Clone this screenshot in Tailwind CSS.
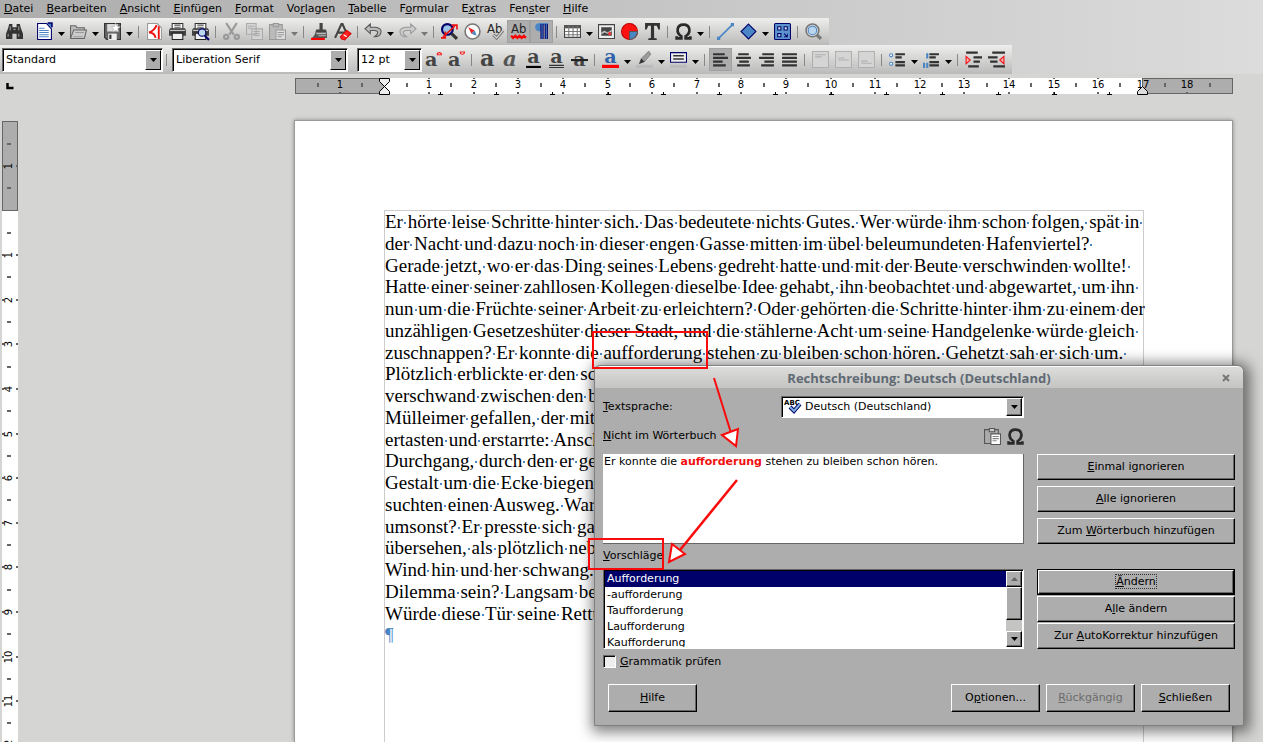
<!DOCTYPE html>
<html lang="de">
<head>
    <meta charset="UTF-8">
    <meta name="viewport" content="width=device-width, initial-scale=1.0">
    <title>Rechtschreibung</title>
    <script src="https://cdn.jsdelivr.net/npm/@tailwindcss/browser@4"></script>
</head>
<body class="relative h-screen overflow-hidden flex flex-col bg-[#d5d5d3] text-black text-[11px] leading-4 font-['DejaVu_Sans',sans-serif]">
    <svg class="hidden">
        <symbol id="drop" viewBox="0 0 7 4"><path d="M0 0h7L3.5 4z" fill="currentColor"/></symbol>
    </svg>

    <header class="bg-linear-to-r from-[#adadad] to-[#dcdcdc]">
        <nav class="flex gap-[13px] h-[18px] pl-1 pt-px">
            <a href="#"><u>D</u>atei</a>
            <a href="#"><u>B</u>earbeiten</a>
            <a href="#"><u>A</u>nsicht</a>
            <a href="#"><u>E</u>infügen</a>
            <a href="#"><u>F</u>ormat</a>
            <a href="#">Vo<u>r</u>lagen</a>
            <a href="#"><u>T</u>abelle</a>
            <a href="#">F<u>o</u>rmular</a>
            <a href="#">E<u>x</u>tras</a>
            <a href="#">Fen<u>s</u>ter</a>
            <a href="#"><u>H</u>ilfe</a>
        </nav>

        <!-- Standard toolbar -->
        <div class="flex items-center w-fit h-[27px] pl-[3px] pr-1 bg-linear-to-b from-[#eeeeec] to-[#bababa] [&>button]:w-[23px] [&>button]:h-[23px] [&>button]:grid [&>button]:place-items-center [&>button>svg]:w-[17px] [&>button>svg]:h-[17px] [&>button>svg]:overflow-visible [&>i]:w-2 [&>i]:h-3 [&>i]:border-r [&>i]:border-[#888] [&>i]:-translate-x-1 [&>svg]:w-[7px] [&>svg]:h-1 [&>svg]:mx-0.5 [&>svg]:mt-1">
            <button aria-label="Suchen" class="mr-[7px]"><svg viewBox="0 0 16 16"><path d="M3 1h3v3h4V1h3l1 4 2 5v5h-6v-5H6v5H0v-5l2-5z" fill="#333"/><path d="M4 3v4M12 3v4M2 10v3M12 10v3M7 6h2" stroke="#999"/></svg></button>
            <button aria-label="Neu"><svg viewBox="0 0 16 16"><path d="M1.5.5H10l4.500 5v10h-13z" fill="#fff" stroke="#00006b"/><path d="M10 0l5 5V0z" fill="#4a86c5"/><path d="M11 0h4v4" fill="none" stroke="#00006b" stroke-width="1.500"/><path d="M3 5h5M3 7h9M3 9h9M3 11h9M3 13h9" stroke="#4a86c5"/></svg></button>
            <svg><use href="#drop"/></svg>
            <button aria-label="Öffnen"><svg viewBox="0 0 16 16"><path d="M.5 14.500v-12h5l1 2h7v3" fill="#bbb" stroke="#666"/><path d="M.5 14.500l3-8h12l-2 8z" fill="#ccc" stroke="#666"/><path d="M5 9h8M3 13h9" stroke="#999"/></svg></button>
            <svg><use href="#drop"/></svg>
            <button aria-label="Speichern"><svg viewBox="0 0 16 16"><path d="M.5.500h15v15h-13l-2-2z" fill="#666" stroke="#333"/><path d="M3 1h10v7H3z" fill="#ddd"/><path d="M4 10h8v6H4z" fill="#eee"/><path d="M5 11h2v4H5z" fill="#333"/><path d="M11 0l1.500 3 3 .5-2.500 2 .8 3L11 7 8 8.500 9 5.500 7 3.500l3-.5z" fill="#fff" stroke="#999" stroke-width=".5"/></svg></button>
            <svg><use href="#drop"/></svg><i></i>
            <button aria-label="Als PDF exportieren"><svg viewBox="0 0 16 16"><path d="M1.500.500h9l4 4v11h-13z" fill="#fff" stroke="#999"/><path d="M12 3v12M10 2Q8 7 3 9q5 0 6 5" fill="none" stroke="#f01010" stroke-width="1.800"/></svg></button>
            <button aria-label="Drucken"><svg viewBox="0 0 16 16"><path d="M3 .5h10V6H3z" fill="#fff" stroke="#333"/><path d="M5 2h6M5 4h6" stroke="#555"/><path d="M1 5h14l1 2v5H0V7z" fill="#444"/><path d="M1 7h14" stroke="#ccc"/><path d="M3 9.500h10v6H3z" fill="#eee" stroke="#222"/></svg></button>
            <button aria-label="Druckvorschau"><svg viewBox="0 0 16 16"><path d="M3 .5h10V6H3z" fill="#fff" stroke="#333"/><path d="M5 2h6M5 4h6" stroke="#555"/><path d="M1 5h14l1 2v5H0V7z" fill="#444"/><path d="M1 7h14" stroke="#ccc"/><path d="M3 9.500h10v6H3z" fill="#eee" stroke="#222"/><circle cx="9.500" cy="9" r="3.500" fill="#bcd8ee" stroke="#00006b"/><path d="M12 12l4 4" stroke="#00006b" stroke-width="2"/></svg></button>
            <i></i>
            <button aria-label="Ausschneiden"><svg viewBox="0 0 16 16" fill="none" stroke="#999" stroke-width="2"><path d="M3 0l7 11M13 0L6 11"/><circle cx="3" cy="13" r="2"/><circle cx="13" cy="13" r="2"/></svg></button>
            <button aria-label="Kopieren"><svg viewBox="0 0 16 16" fill="#d5d5d5" stroke="#aaa"><path d="M.5.5h9v10h-9zM5.500 5.500h10v10h-10z"/><path d="M2 3h6M2 5h3M7 8h6M7 10h6M7 12h6"/></svg></button>
            <button aria-label="Einfügen"><svg viewBox="0 0 16 16" fill="#bbb" stroke="#999"><path d="M.5 1.500h12v14H.500z"/><path d="M4 .5h5v3H4z"/><path d="M6.500 6.500h9v9h-9z" fill="#ddd"/><path d="M8 9h6M8 11h6M8 13h4"/></svg></button>
            <svg class="text-[#777]"><use href="#drop"/></svg><i></i>
            <button aria-label="Format übertragen"><svg viewBox="0 0 16 16"><path d="M8 0h3v6h3l1 3H4l1-3h3z" fill="#444"/><path d="M4 9h11v5H1q3-2 3-5z" fill="#555"/><path d="M5 10h9M7 12h7" stroke="#bbb"/><path d="M0 15h13" stroke="#f00" stroke-width="2"/></svg></button>
            <button aria-label="Direkte Formatierung löschen"><svg viewBox="0 0 16 16"><path d="M1 14L7 1h1l4 9M4 9h6" fill="none" stroke="#444" stroke-width="2"/><path d="M6 13l6-6 4 3-6 6-3-1z" fill="#f22" stroke="#d00"/><path d="M9 11l3 2" stroke="#fff"/></svg></button>
            <i></i>
            <button aria-label="Rückgängig"><svg viewBox="0 0 16 16"><path d="M5 1v3h5q6 1 5 5-1 4-6 4 3-2 3-4 0-2-3-2H5v3L0 5.500z" fill="#bbb" stroke="#555"/></svg></button>
            <svg><use href="#drop"/></svg>
            <button aria-label="Wiederherstellen"><svg viewBox="0 0 16 16"><path d="M11 1v3H6Q0 5 1 9q1 4 6 4-3-2-3-4 0-2 3-2h4v3l5-4.500z" fill="#ccc" stroke="#999"/></svg></button>
            <svg class="text-[#777]"><use href="#drop"/></svg><i></i>
            <button aria-label="Suchen und Ersetzen"><svg viewBox="0 0 16 16"><circle cx="6" cy="6" r="5" fill="#9cc4e6" stroke="#00006b" stroke-width="2"/><path d="M10 10l5 5" stroke="#333" stroke-width="3"/><path d="M2 13L13 3M10 2h5v4M4 8v6H0" fill="none" stroke="#e11" stroke-width="1.500"/></svg></button>
            <button aria-label="Navigator"><svg viewBox="0 0 16 16"><circle cx="8" cy="8" r="7" fill="#fff" stroke="#777" stroke-width="1.500"/><path d="M4 4l6 3-3 3z" fill="#e22"/><path d="M12 12L7 10l3-3z" fill="#4a86c5"/></svg></button>
            <button aria-label="Rechtschreibung"><svg viewBox="0 0 16 16"><text x="0" y="9" font-size="11" fill="#222">Ab</text><path d="M6 11l3 3 6-7" fill="none" stroke="#777" stroke-width="3"/><path d="M6 11l3 3 6-7" fill="none" stroke="#ddd"/></svg></button>
            <button aria-label="Automatische Rechtschreibprüfung" aria-pressed="true" class="bg-[#adadad] border border-[#a0a0a0]"><svg viewBox="0 0 16 16"><text x="1" y="9" font-size="11" fill="#222">Ab</text><path d="M1 12l2 2 2-2 2 2 2-2 2 2 2-2 2 2" fill="none" stroke="#f00" stroke-width="2"/></svg></button>
            <button aria-label="Formatierungszeichen" aria-pressed="true" class="bg-[#adadad] border border-[#a0a0a0]"><svg viewBox="0 0 16 16"><path d="M8 8Q2 8 2 4t5-4h7v2H8z" fill="#4a86c5"/><path d="M8.500 1v14M12.500 1v14" stroke="#00006b" stroke-width="3"/><path d="M8.500 1v14M12.500 1v14" stroke="#4a86c5"/></svg></button>
            <i></i>
            <button aria-label="Tabelle"><svg viewBox="0 0 16 16"><path d="M.500 2.500h15v11H.500z" fill="#fff" stroke="#444"/><path d="M0 2h16v3H0z" fill="#555"/><path d="M4.500 3v10M8.500 3v10M12.500 3v10M1 8h14M1 11h14" stroke="#777"/></svg></button>
            <svg><use href="#drop"/></svg>
            <button aria-label="Bild"><svg viewBox="0 0 16 16"><path d="M.500 1.500h15v13H.500z" fill="#eee" stroke="#444"/><path d="M3 4h10v8H3z" fill="#444"/><path d="M3 9l3-2 3 2 4-3v2l-4 2-3-1-3 2z" fill="#bbb"/><circle cx="11" cy="10" r="1.500" fill="#f33"/></svg></button>
            <button aria-label="Diagramm"><svg viewBox="0 0 16 16"><circle cx="8" cy="8" r="7.500" fill="#f11" stroke="#b00"/><path d="M8 8h7.500A7.500 7.500 0 0 1 8 15.500z" fill="#4a86c5" stroke="#555"/></svg></button>
            <button aria-label="Textfeld"><svg viewBox="0 0 16 16"><path d="M1 0h14v6h-1.500L12 2.500H9.500V14l2.500.500V16H4v-1.500L6.500 14V2.500H4L2.500 6H1z" fill="#333"/></svg></button>
            <i></i>
            <button aria-label="Sonderzeichen"><svg viewBox="0 0 16 16"><path d="M1.500 12.500v2H6v-2Q2 10 2.500 6 3 1.500 8 1.500T13.500 6q.5 4-3.500 6.500v2h4.500v-2" fill="none" stroke="#2a2a2a" stroke-width="2.500"/></svg></button>
            <svg><use href="#drop"/></svg><i></i>
            <button aria-label="Linie"><svg viewBox="0 0 16 16"><path d="M1 15L15 1" stroke="#4a86c5" stroke-width="1.500"/><path d="M0 13h3v3H0zM13 0h3v3h-3z" fill="#4a86c5"/></svg></button>
            <button aria-label="Form"><svg viewBox="0 0 16 16"><path d="M8 1l7 7-7 7-7-7z" fill="#4a86c5" stroke="#00006b"/></svg></button>
            <svg><use href="#drop"/></svg>
            <button aria-label="Zeichenfunktionen"><svg viewBox="0 0 16 16"><rect x=".5" y=".5" width="15" height="15" rx="1" fill="#5b93cc" stroke="#00006b"/><path d="M3.500 3.500h3v3h-3zM9.500 3.500h3v3h-3zM3.500 10h3v3h-3zM9.500 10l3 3M12.500 10v3h-3" fill="#cfe1f3" stroke="#00006b"/></svg></button>
            <i></i>
            <button aria-label="Zoom"><svg viewBox="0 0 16 16"><path d="M10 10l5 5" stroke="#777" stroke-width="3"/><circle cx="7" cy="7" r="6" fill="#ddd" stroke="#777" stroke-width="1.500"/><circle cx="7" cy="7" r="4" fill="#b9d6ee" stroke="#4a86c5"/></svg></button>
        </div>

        <!-- Formatting toolbar -->
        <div class="flex items-center w-fit h-[29px] pl-0.5 pr-1 bg-linear-to-b from-[#eeeeec] to-[#bababa] [&>button]:w-[23px] [&>button]:h-[23px] [&>button]:grid [&>button]:place-items-center [&>button>svg]:w-[17px] [&>button>svg]:h-[17px] [&>button>svg]:overflow-visible [&>i]:w-2 [&>i]:h-3 [&>i]:border-r [&>i]:border-[#888] [&>i]:-translate-x-1 [&>svg]:w-[7px] [&>svg]:h-1 [&>svg]:mx-0.5 [&>svg]:mt-1">
            <div class="flex w-[161px] h-6 border border-t-[#666] border-l-[#666] border-white bg-white shadow-[inset_1px_1px_0_#000]">
                <select aria-label="Absatzvorlage" class="appearance-none flex-1 min-w-0 pl-[3px] outline-none"><option>Standard</option></select>
                <span class="w-4 m-px ml-0 grid place-items-center bg-[#adadad] border border-white border-r-black border-b-black"><svg class="w-[7px] h-1"><use href="#drop"/></svg></span>
            </div>
            <i class="mr-px"></i>
            <div class="flex w-[176px] h-6 border border-t-[#666] border-l-[#666] border-white bg-white shadow-[inset_1px_1px_0_#000]">
                <select aria-label="Schriftart" class="appearance-none flex-1 min-w-0 pl-[3px] outline-none"><option>Liberation Serif</option></select>
                <span class="w-4 m-px ml-0 grid place-items-center bg-[#adadad] border border-white border-r-black border-b-black"><svg class="w-[7px] h-1"><use href="#drop"/></svg></span>
            </div>
            <div class="ml-[9px] flex w-[65px] h-6 border border-t-[#666] border-l-[#666] border-white bg-white shadow-[inset_1px_1px_0_#000]">
                <select aria-label="Schriftgröße" class="appearance-none flex-1 min-w-0 pl-[3px] outline-none"><option>12 pt</option></select>
                <span class="w-4 m-px ml-0 grid place-items-center bg-[#adadad] border border-white border-r-black border-b-black"><svg class="w-[7px] h-1"><use href="#drop"/></svg></span>
            </div>
            <button aria-label="Schrift vergrößern"><svg viewBox="0 0 16 16" font-family="DejaVu Serif" font-weight="bold"><text x="0" y="14" font-size="18" fill="#444">a</text><path d="M11.500 3.500a2 2 0 0 1 4 0z" fill="#fff" stroke="#e22"/></svg></button>
            <button aria-label="Schrift verkleinern"><svg viewBox="0 0 16 16" font-family="DejaVu Serif" font-weight="bold"><text x="0" y="14" font-size="18" fill="#444">a</text><path d="M11.500 1a2 2 0 0 0 4 0z" fill="#fff" stroke="#e22"/></svg></button>
            <i></i>
            <button aria-label="Fett"><svg viewBox="0 0 16 16" font-family="DejaVu Serif" font-weight="bold"><text x="1" y="14" font-size="21" fill="#444">a</text></svg></button>
            <button aria-label="Kursiv"><svg viewBox="0 0 16 16" font-family="DejaVu Serif" font-style="italic" font-weight="bold"><text x="1" y="14" font-size="20" fill="#555">a</text></svg></button>
            <button aria-label="Unterstrichen"><svg viewBox="0 0 16 16" font-family="DejaVu Serif" font-weight="bold"><text x="2" y="11" font-size="18" fill="#444">a</text><path d="M1 15h14" stroke="#000" stroke-width="2"/></svg></button>
            <button aria-label="Doppelt unterstrichen"><svg viewBox="0 0 16 16" font-family="DejaVu Serif" font-weight="bold"><text x="2" y="11" font-size="18" fill="#444">a</text><path d="M1 13.500h14M1 15.500h14" stroke="#333"/></svg></button>
            <button aria-label="Durchgestrichen"><svg viewBox="0 0 16 16" font-family="DejaVu Serif" font-weight="bold"><text x="2" y="14" font-size="18" fill="#444">a</text><path d="M0 8.500h16" stroke="#222" stroke-width="2"/></svg></button>
            <i></i>
            <button aria-label="Schriftfarbe"><svg viewBox="0 0 16 16" font-family="DejaVu Serif" font-weight="bold"><text x="2" y="11" font-size="18" fill="#2f62a8">a</text><path d="M0 14.500h16" stroke="#f00" stroke-width="3"/></svg></button>
            <svg><use href="#drop"/></svg>
            <button aria-label="Zeichenhintergrund"><svg viewBox="0 0 16 16"><path d="M3 12l2-5 7-7 2 3-6 7z" fill="#999" stroke="#666" stroke-width=".5"/><path d="M3 12l2-5 3 3z" fill="#333"/><path d="M0 14.500h16" stroke="#bbb" stroke-width="3"/></svg></button>
            <svg><use href="#drop"/></svg>
            <button aria-label="Absatzhintergrund"><svg viewBox="0 0 16 16"><path d="M.500 1.500h15v9H.500z" fill="#eee" stroke="#00006b"/><path d="M3 4.500h10M3 7.500h10" stroke="#333" stroke-width="1.500"/><path d="M0 14.500h16" stroke="#bbb" stroke-width="3"/></svg></button>
            <svg><use href="#drop"/></svg><i></i>
            <button aria-label="Linksbündig" aria-pressed="true" class="bg-[#adadad] border border-[#a0a0a0]"><svg viewBox="0 0 16 16" stroke="#333" stroke-width="2"><path d="M1 3h11M1 6.500h14M1 10h9M1 13.500h12"/></svg></button>
            <button aria-label="Zentriert"><svg viewBox="0 0 16 16" stroke="#333" stroke-width="2"><path d="M3 3h10M1 6.500h14M4 10h9M2 13.500h12"/></svg></button>
            <button aria-label="Rechtsbündig"><svg viewBox="0 0 16 16" stroke="#333" stroke-width="2"><path d="M4 3h11M1 6.500h14M6 10h9M3 13.500h12"/></svg></button>
            <button aria-label="Blocksatz"><svg viewBox="0 0 16 16" stroke="#333" stroke-width="2"><path d="M1 3h14M1 6.500h14M1 10h14M1 13.500h14"/></svg></button>
            <i></i>
            <button aria-label="Oben ausrichten"><svg viewBox="0 0 16 16" fill="#d5d5d5" stroke="#b0b0b0"><path d="M.500.500h15v15H.500zM3 3.500h10M3 5.500h6"/></svg></button>
            <button aria-label="Zentriert ausrichten"><svg viewBox="0 0 16 16" fill="#d5d5d5" stroke="#b0b0b0"><path d="M.500.500h15v15H.500zM3 6.500h6M3 8.500h10"/></svg></button>
            <button aria-label="Unten ausrichten"><svg viewBox="0 0 16 16" fill="#d5d5d5" stroke="#b0b0b0"><path d="M.500.500h15v15H.500zM3 9.500h6M3 11.500h10"/></svg></button>
            <i></i>
            <button aria-label="Aufzählung"><svg viewBox="0 0 16 16"><circle cx="2" cy="4" r="1.500" fill="#fff" stroke="#4a86c5"/><circle cx="2" cy="12" r="1.500" fill="#fff" stroke="#4a86c5"/><path d="M6 3h9M6 6h6M6 10.500h9M6 13.500h9" stroke="#333" stroke-width="2"/></svg></button>
            <svg><use href="#drop"/></svg>
            <button aria-label="Nummerierung"><svg viewBox="0 0 16 16"><path d="M4 2v5M1 11v5M4 11v5" stroke="#4a86c5" stroke-width="2"/><path d="M6 3h9M6 6h6M6 10.500h9M6 13.500h9" stroke="#333" stroke-width="2"/></svg></button>
            <svg><use href="#drop"/></svg><i></i>
            <button aria-label="Einzug vergrößern"><svg viewBox="0 0 16 16"><path d="M1 1.500h11M8 6h8M8 10h6M3 14.500h10" stroke="#333" stroke-width="2"/><path d="M1 5v7l4-3.500z" fill="#faa" stroke="#e11"/></svg></button>
            <button aria-label="Einzug verkleinern"><svg viewBox="0 0 16 16"><path d="M4 1.500h12M0 6h9M2 10h7M5 14.500h11" stroke="#333" stroke-width="2"/><path d="M15 5v7l-4-3.500z" fill="#faa" stroke="#e11"/></svg></button>
        </div>
    </header>

    <!-- Horizontal ruler -->
    <div class="flex h-[26px] pt-1 bg-[#d5d5d3]">
        <svg class="w-[295px] h-[17px] shrink-0" viewBox="0 0 295 17"><path d="M7.500 5v5h6" fill="none" stroke="#000" stroke-width="2.500"/></svg>
        <svg id="hruler" class="w-[938px] h-[18px] shrink-0 text-[10px]" viewBox="0 0 938 18">
            <rect width="938" height="16" fill="#fff"/>
            <rect x=".5" y=".5" width="89" height="15" fill="#adadad" stroke="#666"/>
            <rect x="847.500" y=".5" width="90" height="15" fill="#adadad" stroke="#666"/>
        </svg>
    </div>

    <main class="flex flex-1 min-h-0">
        <svg id="vruler" class="mt-[21px] ml-0.5 w-4 h-[640px] shrink-0 text-[10px]" viewBox="0 0 16 640">
            <rect width="16" height="640" fill="#fff"/>
            <rect x=".5" y=".5" width="15" height="89" fill="#adadad" stroke="#666"/>
        </svg>
        <article class="mt-5 ml-[276px] w-[939px] shrink-0 pt-[89px] pl-[89px] border border-b-0 border-[#999] bg-white shadow-[0_0_4px_rgba(0,0,0,0.35)]">
            <div class="w-[760px] h-full border border-b-0 border-[#ccc]">
                <div id="text" class="grid auto-rows-fr h-[435px] whitespace-pre text-[19px] leading-[21px] font-['Liberation_Serif',serif]">
                    <p>Er hörte leise Schritte hinter sich. Das bedeutete nichts Gutes. Wer würde ihm schon folgen, spät in </p>
                    <p>der Nacht und dazu noch in dieser engen Gasse mitten im übel beleumundeten Hafenviertel? </p>
                    <p>Gerade jetzt, wo er das Ding seines Lebens gedreht hatte und mit der Beute verschwinden wollte! </p>
                    <p>Hatte einer seiner zahllosen Kollegen dieselbe Idee gehabt, ihn beobachtet und abgewartet, um ihn </p>
                    <p>nun um die Früchte seiner Arbeit zu erleichtern? Oder gehörten die Schritte hinter ihm zu einem der</p>
                    <p>unzähligen Gesetzeshüter dieser Stadt, und die stählerne Acht um seine Handgelenke würde gleich </p>
                    <p>zuschnappen? Er konnte die aufforderung stehen zu bleiben schon hören. Gehetzt sah er sich um. </p>
                    <p>Plötzlich erblickte er den sc</p>
                    <p>verschwand zwischen den b</p>
                    <p>Mülleimer gefallen, der mit</p>
                    <p>ertasten und erstarrte: Ansch</p>
                    <p>Durchgang, durch den er ge</p>
                    <p>Gestalt um die Ecke biegen</p>
                    <p>suchten einen Ausweg. War</p>
                    <p>umsonst? Er presste sich ga</p>
                    <p>übersehen, als plötzlich neb</p>
                    <p>Wind hin und her schwang.</p>
                    <p>Dilemma sein? Langsam be</p>
                    <p>Würde diese Tür seine Rettu</p>
                    <p class="text-[#4a86c5]">¶</p>
                </div>
            </div>
        </article>
    </main>

    <!-- Spelling dialog -->
    <section role="dialog" aria-labelledby="title" class="absolute left-[594px] top-[365px] w-[650px] rounded-t-md border border-[#808080] bg-[#adadad] shadow-[2px_2px_14px_4px_rgba(0,0,0,0.5)]">
        <div class="relative h-[22px] grid place-items-center rounded-t-md border-t border-white bg-linear-to-b from-[#dcdcda] to-[#c4c4c2]">
            <h1 id="title" class="text-[13px] font-bold text-[#5f6973] font-['Open_Sans',sans-serif]">Rechtschreibung: Deutsch (Deutschland)</h1>
            <button aria-label="Schließen" class="absolute right-3 top-1.5"><svg class="size-2.5" viewBox="0 0 10 10"><path d="M2 2l6 6M8 2l-6 6" stroke="#777" stroke-width="2"/></svg></button>
        </div>
        <form class="px-2 pt-2 pb-[13px]" onsubmit="return false">
            <div class="flex items-center justify-between w-[421px] h-[22px]">
                <label for="lang"><u>T</u>extsprache:</label>
                <div class="flex items-stretch w-[243px] h-[22px] border border-t-[#666] border-l-[#666] border-white bg-white shadow-[inset_1px_1px_0_#000]">
                    <svg class="w-5 h-5 ml-0.5 overflow-visible" viewBox="0 0 20 20"><text x="0" y="8" font-size="7" font-weight="bold">ABC</text><path d="M6 10l4 4 6-7" fill="none" stroke="#00006b" stroke-width="4"/><path d="M6 10l4 4 6-7" fill="none" stroke="#7fb0e0" stroke-width="2"/></svg>
                    <select id="lang" class="appearance-none flex-1 min-w-0 pl-px outline-none"><option>Deutsch (Deutschland)</option></select>
                    <span class="w-4 m-px ml-0 grid place-items-center bg-[#adadad] border border-white border-r-black border-b-black shadow-[inset_-1px_-1px_0_#666]"><svg class="w-[7px] h-1"><use href="#drop"/></svg></span>
                </div>
            </div>
            <div class="flex items-center gap-1.5 mt-2 w-[421px] h-5">
                <span id="notfound" class="mr-auto"><u>N</u>icht im Wörterbuch</span>
                <button aria-label="Einfügen"><svg class="size-[17px]" viewBox="0 0 16 16" stroke="#555"><path d="M.500 1.500h13v13H.500z" fill="#aaa"/><path d="M5 .5h5v3H5z" fill="#ccc"/><path d="M6.500 5.500h9v10h-9z" fill="#fff"/><path d="M8 8h6M8 10h6M8 12h4" stroke="#888"/></svg></button>
                <button aria-label="Sonderzeichen"><svg class="size-[17px]" viewBox="0 0 16 16"><path d="M1.500 12.500v2H6v-2Q2 10 2.500 6 3 1.500 8 1.500T13.500 6q.5 4-3.500 6.500v2h4.500v-2" fill="none" stroke="#2a2a2a" stroke-width="2.500"/></svg></button>
            </div>
            <div class="flex gap-[13px] mt-2 h-[90px]">
                <div role="textbox" aria-labelledby="notfound" contenteditable="true" spellcheck="false" class="w-[421px] pl-px bg-white border-r border-b border-[#666] outline-none">Er konnte die <b class="text-[#f01010]">aufforderung</b> stehen zu bleiben schon hören.</div>
                <div class="flex flex-col gap-1.5 flex-1 [&>button]:h-[26px] [&>button]:border [&>button]:border-white [&>button]:border-r-black [&>button]:border-b-black [&>button]:shadow-[inset_-1px_-1px_0_#666]">
                    <button><u>E</u>inmal ignorieren</button>
                    <button><u>A</u>lle ignorieren</button>
                    <button>Zum <u>W</u>örterbuch hinzufügen</button>
                </div>
            </div>
            <div id="suggest" class="h-[25px] pt-1"><u>V</u>orschläge</div>
            <div class="flex gap-[13px] h-20">
                <div class="flex w-[421px] border border-t-[#666] border-l-[#666] border-white bg-white shadow-[inset_1px_1px_0_#000] overflow-hidden">
                    <ul role="listbox" aria-labelledby="suggest" class="flex-1 m-px mr-0 overflow-hidden *:pl-0.5">
                        <li role="option" aria-selected="true" class="bg-[#00006b] text-white">Aufforderung</li>
                        <li role="option">-aufforderung</li>
                        <li role="option">Taufforderung</li>
                        <li role="option">Laufforderung</li>
                        <li role="option">Kaufforderung</li>
                    </ul>
                    <div class="flex flex-col w-4 m-px ml-0 bg-[#c4c4c2] *:border *:border-white *:border-r-black *:border-b-black *:bg-[#adadad] *:shadow-[inset_-1px_-1px_0_#666]">
                        <button type="button" aria-label="Nach oben" class="grid place-items-center h-4 text-[#666]"><svg class="w-[7px] h-1 rotate-180"><use href="#drop"/></svg></button>
                        <span class="h-[33px]"></span>
                        <button type="button" aria-label="Nach unten" class="grid place-items-center h-4 mt-auto"><svg class="w-[7px] h-1"><use href="#drop"/></svg></button>
                    </div>
                </div>
                <div class="flex flex-col gap-px flex-1 [&>button]:h-[26px] [&>button]:border [&>button]:border-white [&>button]:border-r-black [&>button]:border-b-black [&>button]:shadow-[inset_-1px_-1px_0_#666]">
                    <div class="h-[26px] border border-black"><button class="w-full h-6 border border-white border-r-black border-b-black shadow-[inset_-1px_-1px_0_#666] leading-3"><span class="outline outline-dotted outline-[#333]"><u>Ä</u>ndern</span></button></div>
                    <button>A<u>l</u>le ändern</button>
                    <button>Zur <u>A</u>utoKorrektur hinzufügen</button>
                </div>
            </div>
            <label class="flex items-center gap-1 mt-1.5 h-[13px]">
                <input type="checkbox" class="appearance-none size-[13px] bg-[#eee] border border-t-[#666] border-l-[#666] border-white shadow-[inset_1px_1px_0_#000]">
                <span><u>G</u>rammatik prüfen</span>
            </label>
            <div class="flex gap-1.5 mt-4 px-[5px] *:w-[89px] *:h-7 *:border *:border-white *:border-r-black *:border-b-black *:shadow-[inset_-1px_-1px_0_#666]">
                <button class="mr-auto"><u>H</u>ilfe</button>
                <button>O<u>p</u>tionen...</button>
                <button disabled class="text-[#6b6b6b]"><u>R</u>ückgängig</button>
                <button><u>S</u>chließen</button>
            </div>
        </form>
    </section>

    <!-- Red markers and arrows over the window -->
    <svg class="absolute left-0 top-0 w-[1263px] h-[742px] pointer-events-none" viewBox="0 0 1263 742" fill="none" stroke="#fa0a0a" stroke-width="2">
        <rect x="593" y="332" width="114" height="36"/>
        <rect x="589" y="539" width="74" height="30"/>
        <path d="M714 378l17 55"/>
        <path d="M722 435l16-6-2 17z" fill="#fff"/>
        <path d="M737 480l-57 70" stroke-width="2.500"/>
        <path d="M672 544l13 10-16 8z" fill="#fff"/>
    </svg>

    <script>
        const CM = 44.6;

        function add(svg, tag, attrs, text) {
            const el = document.createElementNS('http://www.w3.org/2000/svg', tag);
            for (const key in attrs) el.setAttribute(key, attrs[key]);
            if (text) el.textContent = text;
            svg.appendChild(el);
        }

        // horizontal ruler: zero sits at the left page margin
        const h = document.getElementById('hruler');
        for (let i = -3; i <= 37; i++) {
            const x = Math.round(89.5 + i * CM / 2);
            if (i === 0) continue;
            if (i % 2) {
                add(h, 'rect', { x: x - 1, y: 5, width: 2, height: 4, fill: '#666' });
            } else {
                add(h, 'rect', { x: x - 1, y: 0, width: 2, height: 1, fill: '#666' });
                add(h, 'rect', { x: x - 1, y: 14, width: 2, height: 2, fill: '#666' });
                add(h, 'text', { x: x, y: 10, 'text-anchor': 'middle' }, String(Math.abs(i / 2)));
            }
        }
        for (let i = 1; i <= 13; i++) {
            const x = Math.round(89.5 + i * CM * 1.25);
            add(h, 'path', { d: `M${x - 2} 16.5h5M${x + 0.5} 14v2`, stroke: '#000' });
        }
        add(h, 'path', { d: 'M84.5 .5h10v3l-5 5 5 5v3h-10v-3l5-5-5-5z', fill: '#eee', stroke: '#000' });
        add(h, 'path', { d: 'M842.5 16.5v-3l5-5 5 5v3z', fill: '#ddd', stroke: '#000' });

        const v = document.getElementById('vruler');
        for (let i = -3; i <= 24; i++) {
            const y = Math.round(89.5 + i * CM / 2);
            if (i === 0) continue;
            if (i % 2) {
                add(v, 'rect', { x: 5, y: y - 1, width: 4, height: 2, fill: '#666' });
            } else {
                add(v, 'rect', { x: 0, y: y - 1, width: 2, height: 2, fill: '#666' });
                add(v, 'rect', { x: 14, y: y - 1, width: 2, height: 2, fill: '#666' });
                add(v, 'text', { x: 0, y: 0, transform: `translate(10 ${y}) rotate(-90)`, 'text-anchor': 'middle' }, String(Math.abs(i / 2)));
            }
        }

        // show every space in the text as a small blue dot
        document.querySelectorAll('#text p').forEach(p => {
            p.innerHTML = p.textContent.replace(/ /g,
                '<span class="bg-[linear-gradient(#4a86c5,#4a86c5)] bg-[length:2px_2px] bg-[position:1px_11px] bg-no-repeat"> </span>');
        });
    </script>
</body>
</html>
